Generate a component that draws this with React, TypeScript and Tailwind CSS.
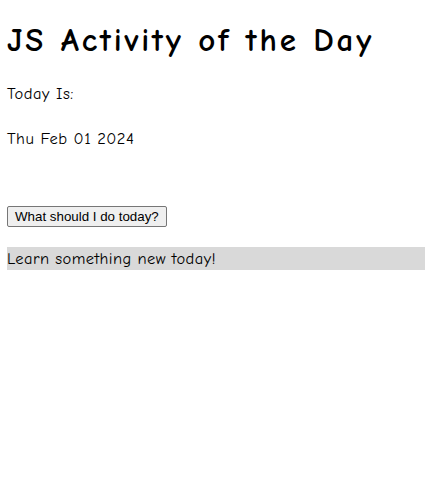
import React from 'react';

const App = () => {
  const today = 'Thu Feb 01 2024';

  return (
    <div className="min-h-[490px] bg-white pl-[7px] text-black font-['Comic_Sans_MS','Comic_Neue','DejaVu_Sans',sans-serif]">
      <h1 className="pt-[18px] h-[62px] text-[33px] leading-[44px] font-bold tracking-[2.8px]">JS Activity of the Day</h1>

      <p className="mt-[21px] text-[16.5px] leading-[22px] tracking-[0.5px]">Today Is:</p>
      <p className="mt-[23px] text-[16.5px] leading-[22px] tracking-[0.5px]">{today}</p>

      <div className="mt-[54px]">
        <button className="h-[21px] px-[7px] border border-[#767676] rounded-[2px] bg-[#efefef] text-[13.33px] leading-[15px] font-['Liberation_Sans',Arial,sans-serif]">
          What should I do today?
        </button>
      </div>

      <div className="mt-[19px] h-[23px] bg-[#d9d9d9] text-[16.5px] leading-[23px] tracking-[0.4px]">Learn something new today!</div>
    </div>
  );
};

export default App;
